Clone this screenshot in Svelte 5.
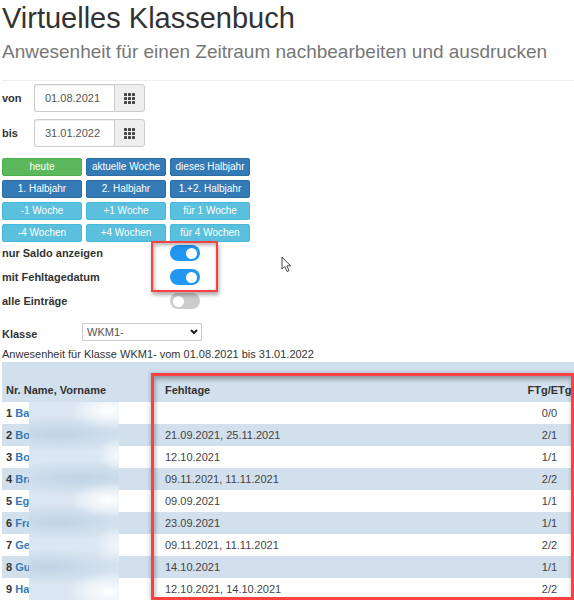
<script lang="ts">
	type Row = { nr: number; name: string; days: string; sum: string };

	let from = $state('01.08.2021');
	let to = $state('31.01.2022');

	const ranges = [
		{ label: 'heute', kind: 'success' },
		{ label: 'aktuelle Woche', kind: 'primary' },
		{ label: 'dieses Halbjahr', kind: 'primary' },
		{ label: '1. Halbjahr', kind: 'primary' },
		{ label: '2. Halbjahr', kind: 'primary' },
		{ label: '1.+2. Halbjahr', kind: 'primary' },
		{ label: '-1 Woche', kind: 'info' },
		{ label: '+1 Woche', kind: 'info' },
		{ label: 'für 1 Woche', kind: 'info' },
		{ label: '-4 Wochen', kind: 'info' },
		{ label: '+4 Wochen', kind: 'info' },
		{ label: 'für 4 Wochen', kind: 'info' }
	];

	let options = $state([
		{ id: 'saldo', label: 'nur Saldo anzeigen', on: true },
		{ id: 'datum', label: 'mit Fehltagedatum', on: true },
		{ id: 'alle', label: 'alle Einträge', on: false }
	]);

	const rows: Row[] = [
		{ nr: 1, name: 'Ba', days: '', sum: '0/0' },
		{ nr: 2, name: 'Bo', days: '21.09.2021, 25.11.2021', sum: '2/1' },
		{ nr: 3, name: 'Bo', days: '12.10.2021', sum: '1/1' },
		{ nr: 4, name: 'Bra', days: '09.11.2021, 11.11.2021', sum: '2/2' },
		{ nr: 5, name: 'Eg', days: '09.09.2021', sum: '1/1' },
		{ nr: 6, name: 'Fra', days: '23.09.2021', sum: '1/1' },
		{ nr: 7, name: 'Ge', days: '09.11.2021, 11.11.2021', sum: '2/2' },
		{ nr: 8, name: 'Gu', days: '14.10.2021', sum: '1/1' },
		{ nr: 9, name: 'Ha', days: '12.10.2021, 14.10.2021', sum: '2/2' }
	];
</script>

{#snippet gridIcon()}
	<svg width="11" height="11" viewBox="0 0 11 11" fill="#444" aria-hidden="true">
		{#each [0, 4, 8] as y}
			{#each [0, 4, 8] as x}
				<rect {x} {y} width="3" height="3" rx="0.4" />
			{/each}
		{/each}
	</svg>
{/snippet}

<main>
	<header>
		<h1>Virtuelles Klassenbuch</h1>
		<h2>Anwesenheit für einen Zeitraum nachbearbeiten und ausdrucken</h2>
	</header>

	<div class="dates">
		<div class="date-row">
			<label for="from">von</label>
			<div class="input-group">
				<input id="from" type="text" bind:value={from} />
				<button type="button" aria-label="Datum von wählen">{@render gridIcon()}</button>
			</div>
		</div>
		<div class="date-row">
			<label for="to">bis</label>
			<div class="input-group">
				<input id="to" type="text" bind:value={to} />
				<button type="button" aria-label="Datum bis wählen">{@render gridIcon()}</button>
			</div>
		</div>
	</div>

	<div class="ranges">
		{#each ranges as range}
			<button type="button" class="btn {range.kind}">{range.label}</button>
		{/each}
	</div>

	<div class="options">
		{#each options as option}
			<div class="option">
				<label for={option.id}>{option.label}</label>
				<input id={option.id} class="switch" type="checkbox" bind:checked={option.on} />
			</div>
		{/each}
		<div class="marker marker-options"></div>
		<svg class="pointer" width="11" height="17" viewBox="0 0 11 17" aria-hidden="true">
			<path
				d="M1 1 V13 L3.8 10.5 L6 15.5 L8 14.6 L5.9 9.8 H9.6 Z"
				fill="#fff"
				stroke="#444"
				stroke-width="1"
			/>
		</svg>
	</div>

	<div class="class-row">
		<label for="class">Klasse</label>
		<div class="select">
			<select id="class">
				<option>WKM1-</option>
			</select>
			<svg width="8" height="6" viewBox="0 0 8 6" aria-hidden="true">
				<path d="M1 1 L4 4 L7 1" fill="none" stroke="#222" stroke-width="2" />
			</svg>
		</div>
	</div>

	<p>Anwesenheit für Klasse WKM1- vom 01.08.2021 bis 31.01.2022</p>

	<div class="report">
		<table>
			<thead>
				<tr>
					<th class="name">Nr. Name, Vorname</th>
					<th>Fehltage</th>
					<th class="sum">FTg/ETg</th>
				</tr>
			</thead>
			<tbody>
				{#each rows as row}
					<tr>
						<td class="name">{row.nr} <a href="#{row.nr}">{row.name}</a></td>
						<td>{row.days}</td>
						<td class="sum">{row.sum}</td>
					</tr>
				{/each}
			</tbody>
		</table>
		<div class="mask"></div>
		<div class="marker marker-report"></div>
	</div>
</main>

<style>
	:global(body) {
		margin: 0;
		background: #fff;
	}
	main {
		padding-left: 2px;
		font: 11px/16px 'Liberation Sans', Arial, sans-serif;
		color: #333;
	}
	h1,
	h2 {
		margin: 0;
		font-weight: 400;
		white-space: nowrap;
	}
	h1 {
		font-size: 29px;
		line-height: 36px;
	}
	h2 {
		padding-bottom: 12px;
		font-size: 19px;
		line-height: 32px;
		color: #777;
	}
	header {
		border-bottom: 1px solid #eee;
	}
	label {
		font-weight: 700;
	}
	input,
	button,
	select {
		box-sizing: border-box;
		margin: 0;
		font: inherit;
	}
	.dates {
		display: grid;
		gap: 7px;
		padding-top: 3px;
	}
	.date-row {
		display: flex;
		align-items: center;
	}
	.date-row label {
		width: 32px;
	}
	.input-group {
		display: flex;
	}
	.input-group input {
		width: 80px;
		height: 28px;
		padding: 0 10px;
		border: 1px solid #ccc;
		border-right: 0;
		border-radius: 3px 0 0 3px;
		color: #555;
		box-shadow: inset 0 1px 1px #00000013;
	}
	.input-group button {
		display: flex;
		align-items: center;
		justify-content: center;
		width: 31px;
		padding: 0;
		border: 1px solid #ccc;
		border-radius: 0 3px 3px 0;
		background: #eee;
	}
	.ranges {
		display: grid;
		grid-template-columns: repeat(3, 80px);
		gap: 4px;
		padding-top: 11px;
	}
	.btn {
		height: 18px;
		padding: 0;
		border: 1px solid;
		border-radius: 2px;
		font-size: 10px;
		line-height: 16px;
		color: #fff;
		white-space: nowrap;
	}
	.success {
		background: #5cb85c;
		border-color: #4cae4c;
	}
	.primary {
		background: #337ab7;
		border-color: #2e6da4;
	}
	.info {
		background: #5bc0de;
		border-color: #46b8da;
	}
	.options {
		position: relative;
		margin-top: -1px;
	}
	.option {
		display: flex;
		align-items: center;
		height: 24px;
	}
	.option label {
		width: 168px;
	}
	.switch {
		appearance: none;
		display: flex;
		align-items: center;
		width: 30px;
		height: 16px;
		padding: 0 3px;
		border-radius: 8px;
		background: #ccc;
	}
	.switch::before {
		content: '';
		width: 11px;
		height: 11px;
		border-radius: 50%;
		background: #fff;
	}
	.switch:checked {
		justify-content: flex-end;
		background: #2196f3;
	}
	.marker {
		position: absolute;
		box-sizing: border-box;
		border: 3px solid #fb4141;
		pointer-events: none;
	}
	.marker-options {
		top: 0;
		left: 149px;
		width: 67px;
		height: 51px;
		border-width: 2px;
		box-shadow:
			inset 1px 2px 4px #0005,
			1px 3px 4px #0005;
	}
	.pointer {
		position: absolute;
		top: 15px;
		left: 279px;
	}
	.class-row {
		display: flex;
		align-items: center;
		padding-top: 9px;
	}
	.class-row label {
		width: 80px;
		padding-top: 4px;
	}
	.select {
		position: relative;
	}
	select {
		appearance: none;
		width: 120px;
		height: 18px;
		padding: 0 4px;
		border: 1px solid #ccc;
		border-radius: 0;
		background: #fff;
		color: #555;
	}
	.select svg {
		position: absolute;
		top: 6px;
		right: 4px;
		pointer-events: none;
	}
	p {
		margin: 4px 0 0;
	}
	.report {
		position: relative;
	}
	table {
		width: 100%;
		border-collapse: collapse;
		table-layout: fixed;
	}
	th,
	td {
		height: 22px;
		padding: 0 0 0 4px;
		text-align: left;
	}
	th {
		height: 24px;
		padding-top: 16px;
		background: #d1e0ec;
		color: #333;
	}
	td {
		color: #444;
	}
	.name {
		width: 155px;
		font-weight: 700;
		color: #333;
	}
	.sum {
		width: 49px;
		padding-left: 0;
		text-align: center;
	}
	tbody tr:nth-child(even) {
		background: #d1e0ec;
	}
	a {
		color: #337ab7;
		text-decoration: none;
	}
	.mask {
		position: absolute;
		top: 40px;
		bottom: 0;
		left: 27px;
		width: 90px;
		background:
			radial-gradient(ellipse 40px 20px at 80px 8px, #fff, #fff0),
			radial-gradient(ellipse 20px 16px at 88px 53px, #fffc, #fff0),
			radial-gradient(ellipse 40px 18px at 80px 98px, #fff, #fff0),
			radial-gradient(ellipse 24px 18px at 88px 143px, #fffa, #fff0),
			radial-gradient(ellipse 44px 20px at 80px 190px, #fff, #fff0),
			radial-gradient(ellipse 90px 18px at 30px 32px, #bfd3e5, #bfd3e500),
			radial-gradient(ellipse 90px 18px at 50px 76px, #bfd3e5, #bfd3e500),
			radial-gradient(ellipse 80px 18px at 30px 120px, #bfd3e5, #bfd3e500),
			radial-gradient(ellipse 80px 18px at 20px 165px, #bfd3e5, #bfd3e500),
			#dae6f1;
	}
	.marker-report {
		top: 11px;
		right: 0;
		bottom: 0;
		left: 149px;
		box-shadow:
			inset 1px 3px 5px #0005,
			-1px 0 4px #0003;
	}
</style>
